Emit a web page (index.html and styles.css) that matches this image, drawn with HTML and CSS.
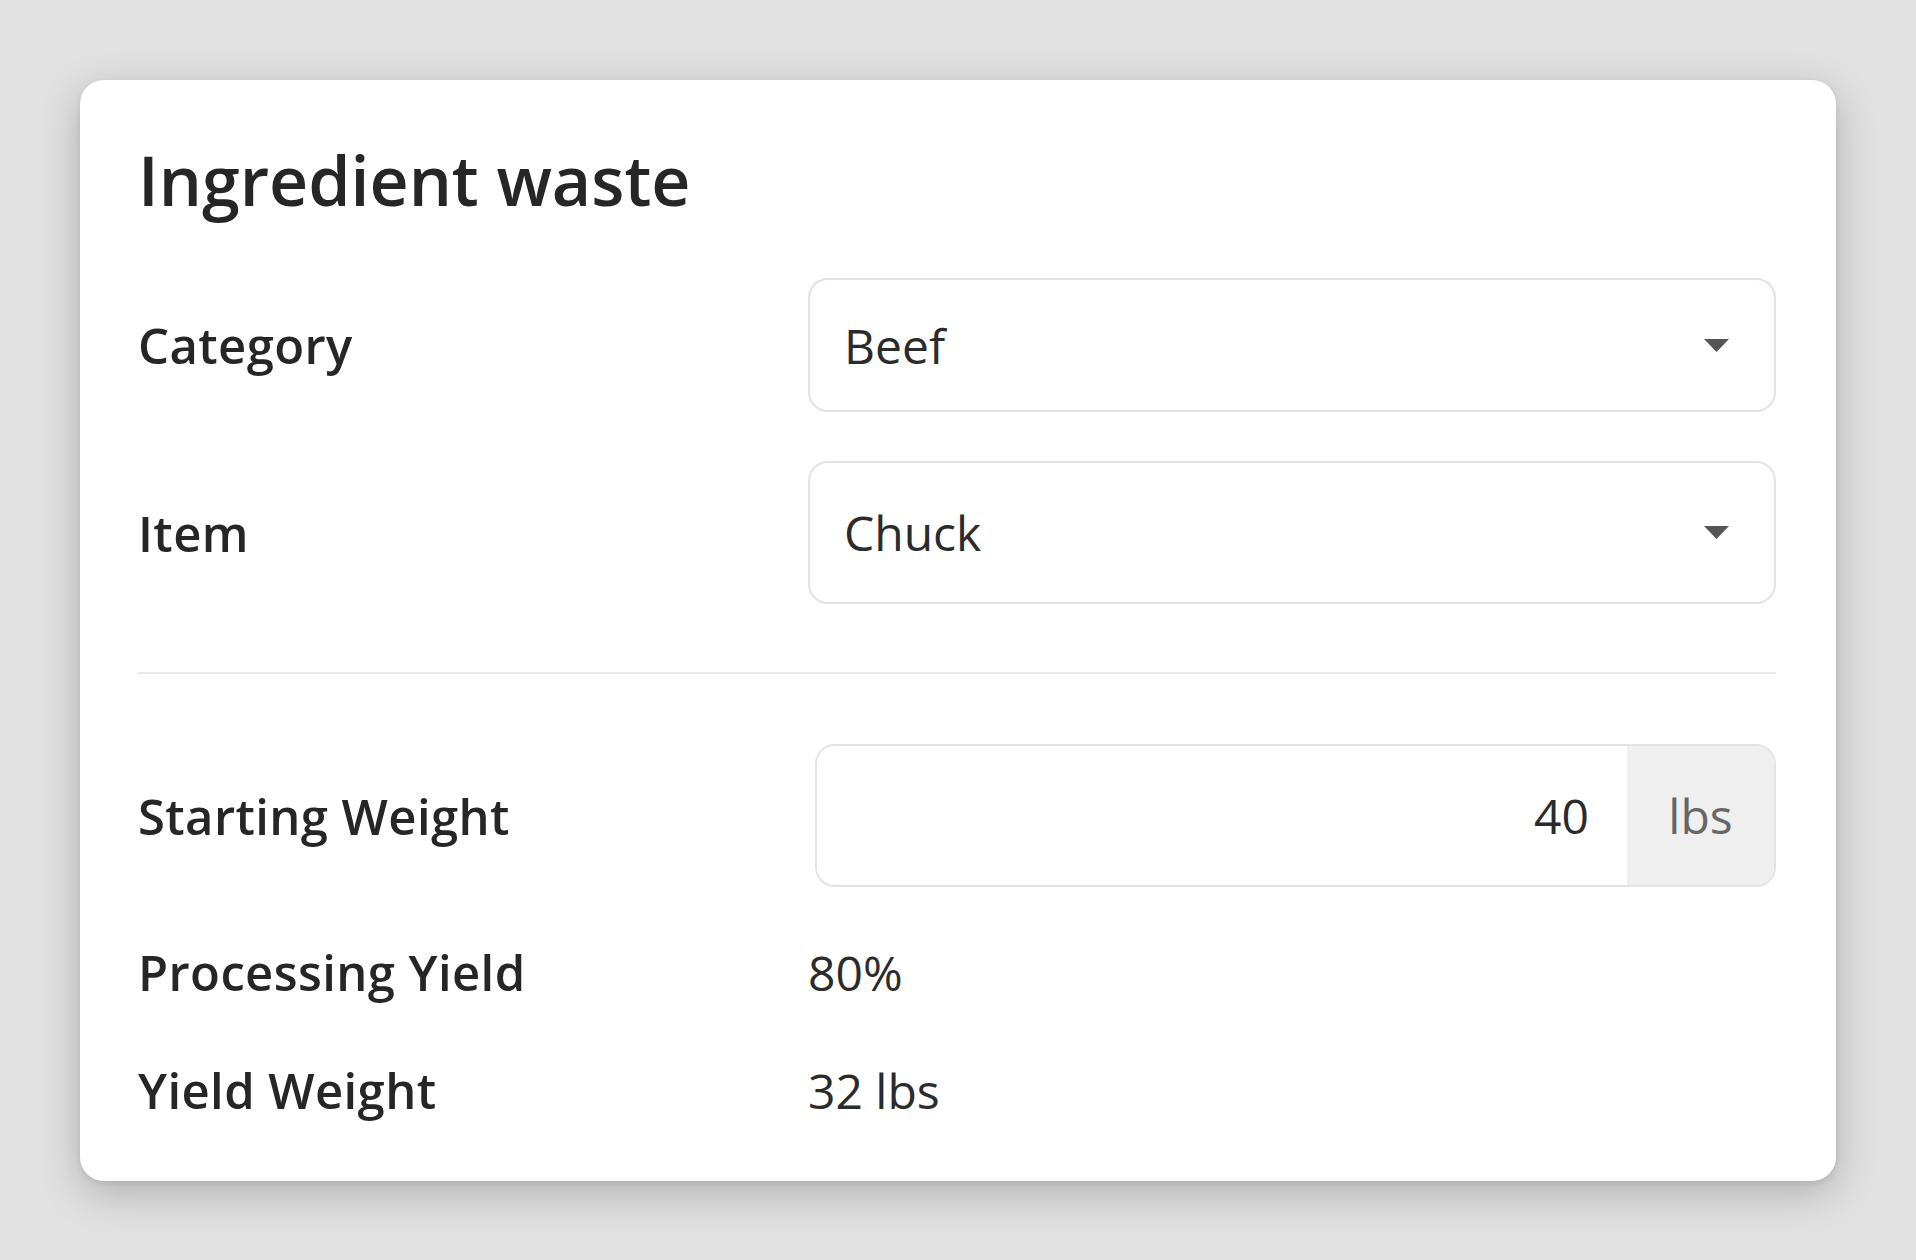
FILE: index.html
```html
<html>
	<head>
		<link rel="stylesheet" href="styles.css">
	</head>
	<body>
		<section class="card">
			<h1 class="card-title">Ingredient waste</h1>

			<div class="form-row">
				<label>Category</label>
				<div class="select select-short">
					<span>Beef</span>
					<svg class="caret" width="25" height="13" viewBox="0 0 25 13"><polygon points="0,0 25,0 12.5,13"/></svg>
				</div>
			</div>

			<div class="form-row row-item">
				<label>Item</label>
				<div class="select">
					<span>Chuck</span>
					<svg class="caret" width="25" height="13" viewBox="0 0 25 13"><polygon points="0,0 25,0 12.5,13"/></svg>
				</div>
			</div>

			<hr class="divider">

			<div class="form-row">
				<label>Starting Weight</label>
				<div class="input-group">
					<input type="text" value="40">
					<span class="addon">lbs</span>
				</div>
			</div>

			<div class="form-row static first-static">
				<label>Processing Yield</label>
				<span class="value">80%</span>
			</div>
			<div class="form-row static">
				<label>Yield Weight</label>
				<span class="value">32 lbs</span>
			</div>
		</section>
	</body>
</html>
```

FILE: styles.css
```css
* {
	box-sizing: border-box;
}
body {
	margin: 0;
	background-color: #e1e1e1;
	color: #262626;
	font-family: "Open Sans", "Noto Sans", sans-serif;
	padding: 80px;
}

.card {
	background: #fff;
	border-radius: 24px;
	padding: 66px 60px 58px 58px;
	box-shadow: 0 12px 40px rgba(0, 0, 0, .22), 0 2px 6px rgba(0, 0, 0, .08);
}

.card-title {
	margin: 0 0 64px 0;
	font-size: 68px;
	line-height: 1;
	font-weight: 600;
}

.form-row {
	display: grid;
	grid-template-columns: 670px 1fr;
	align-items: center;
}
.form-row label {
	font-size: 49px;
	font-weight: 600;
	letter-spacing: 0.4px;
}
.row-item {
	margin-top: 49px;
}

.select {
	display: flex;
	align-items: center;
	justify-content: space-between;
	height: 143px;
	border: 2px solid #e3e3e3;
	border-radius: 20px;
	padding: 0 45px 0 34px;
	font-size: 48px;
	color: #2b2b2b;
}
.select-short {
	height: 134px;
}
.caret {
	fill: #555;
}

.divider {
	border: none;
	border-top: 2px solid #e9e9e9;
	margin: 68px 0 70px 0;
}

.input-group {
	display: flex;
	height: 143px;
	margin-left: 7px;
	border: 2px solid #e3e3e3;
	border-radius: 20px;
	overflow: hidden;
}
.input-group input {
	flex: 1;
	min-width: 0;
	border: none;
	outline: none;
	text-align: right;
	padding: 0 38px 0 20px;
	font-family: inherit;
	font-size: 48px;
	color: #2b2b2b;
	background: #fff;
}
.addon {
	display: flex;
	align-items: center;
	justify-content: center;
	width: 147px;
	background: #efefef;
	color: #666;
	font-size: 48px;
}

.static {
	align-items: baseline;
	margin-top: 52px;
}
.first-static {
	margin-top: 52px;
}
.value {
	font-size: 48px;
	line-height: 48px;
	color: #2b2b2b;
}
```
